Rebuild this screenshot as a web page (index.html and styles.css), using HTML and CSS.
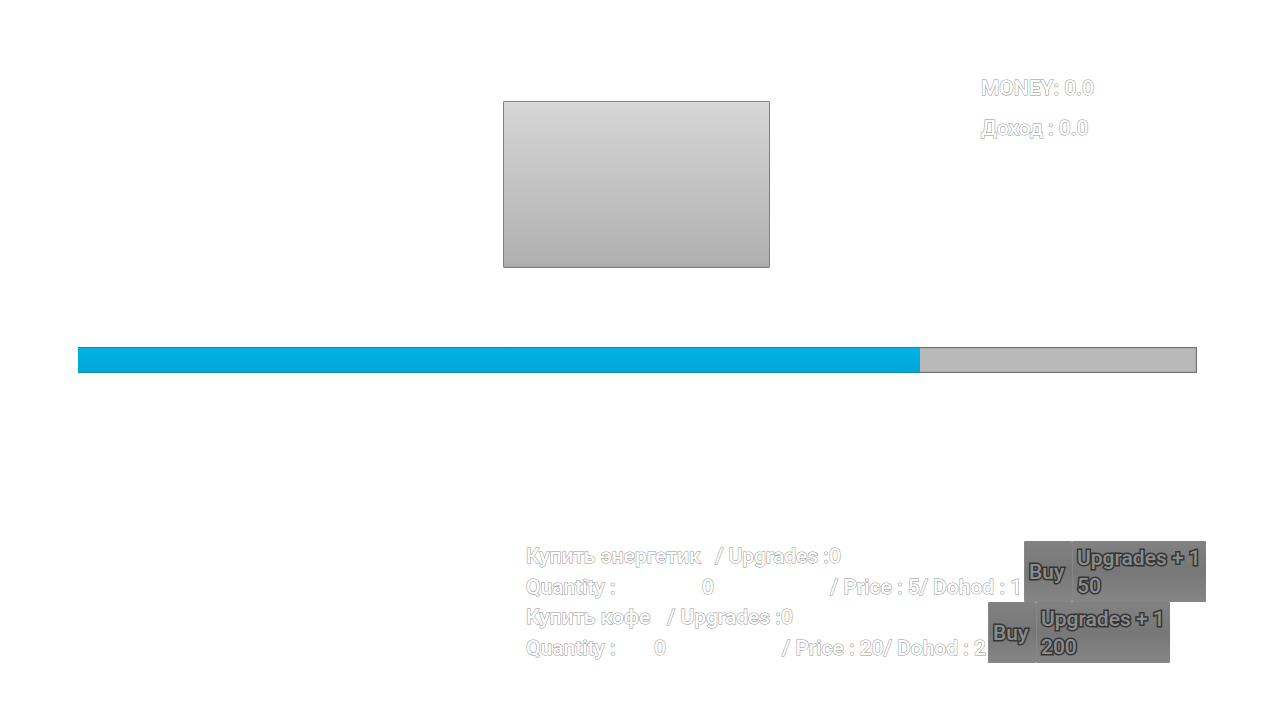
FILE: index.html
```html
<!DOCTYPE html>
<html lang="ru">
<head>
<meta charset="utf-8">
<title>Clicker</title>
<link rel="stylesheet" href="styles.css">
</head>
<body>
<main class="game">
  <header class="top">
    <button class="clicker" type="button" aria-label="Click"></button>
    <div class="stats">
      <p class="label">MONEY: 0.0</p>
      <p class="label">Доход : 0.0</p>
    </div>
  </header>
  <div class="progress" role="progressbar" aria-label="Progress" aria-valuemin="0" aria-valuemax="100" aria-valuenow="75"><div class="fill"></div></div>
  <section class="shop">
    <article class="item item-wide">
      <div class="info label">
        <span>Купить энергетик</span><span class="upgrades">/ Upgrades :0</span>
        <span>Quantity :</span><span>0</span><span class="price">/ Price : 5/ Dohod : 1</span>
      </div>
      <button class="action buy" type="button">Buy</button>
      <button class="action upgrade" type="button">Upgrades + 1<br>50</button>
    </article>
    <article class="item">
      <div class="info label">
        <span>Купить кофе</span><span class="upgrades">/ Upgrades :0</span>
        <span>Quantity :</span><span>0</span><span class="price">/ Price : 20/ Dohod : 2</span>
      </div>
      <button class="action buy" type="button">Buy</button>
      <button class="action upgrade" type="button">Upgrades + 1<br>200</button>
    </article>
  </section>
</main>
</body>
</html>
```
FILE: styles.css
```css
* {
  box-sizing: border-box;
}

body {
  margin: 0;
  background: #fff;
  font-family: Roboto, sans-serif;
  font-size: 21px;
  font-weight: 500;
  line-height: 28px;
}

.game {
  display: flex;
  flex-direction: column;
  min-height: 100vh;
  padding: 74px 0 57px;
}

.top {
  display: grid;
  grid-template-columns: 503px 267px 1fr;
}

.clicker {
  grid-column: 2;
  height: 167px;
  margin-top: 27px;
  padding: 0;
  border: 1px solid #808080;
  border-radius: 1px;
  background: linear-gradient(#d6d6d6, #b0b0b0);
  box-shadow: inset 0 1px #e2e2e2, inset 0 -1px #a0a0a0;
}

.stats {
  padding-left: 211px;
}

.label {
  color: #fff;
  -webkit-text-stroke: 1px #909090;
  paint-order: stroke fill;
  white-space: nowrap;
}

.stats .label {
  margin: 0 0 12px;
}

.progress {
  height: 26px;
  margin: 79px 83px 0 78px;
  border: 1px solid #707070;
  border-left: 0;
  background: #b9b9b9;
  box-shadow: inset 0 0 2px #999;
}

.fill {
  width: 842px;
  max-width: 100%;
  height: 24px;
  background: linear-gradient(#00b2e4, #00a7d8);
  box-shadow: 0 -1px #168aa9, 0 1px #168aa9;
}

.shop {
  margin-top: auto;
  padding-left: 526px;
}

.item {
  display: flex;
  height: 61px;
}

.info {
  display: grid;
  flex: none;
  grid-template-columns: 128px 128px 206px;
  grid-template-rows: 31px 30px;
  line-height: 30px;
}

.item-wide .info {
  grid-template-columns: 176px 128px 194px;
}

.upgrades {
  grid-column: 2 / 4;
  padding-left: 13px;
}

.action {
  flex: none;
  padding: 0 4px;
  border: 1px solid #868686;
  border-width: 0 0 0 1px;
  border-radius: 1px;
  background: linear-gradient(#828282, #777 50%, #868686);
  color: #8c8c8c;
  font: inherit;
  text-align: left;
  white-space: nowrap;
  -webkit-text-stroke: 3px #363636;
  paint-order: stroke fill;
}

.buy {
  width: 48px;
}

.upgrade {
  width: 134px;
}
```
